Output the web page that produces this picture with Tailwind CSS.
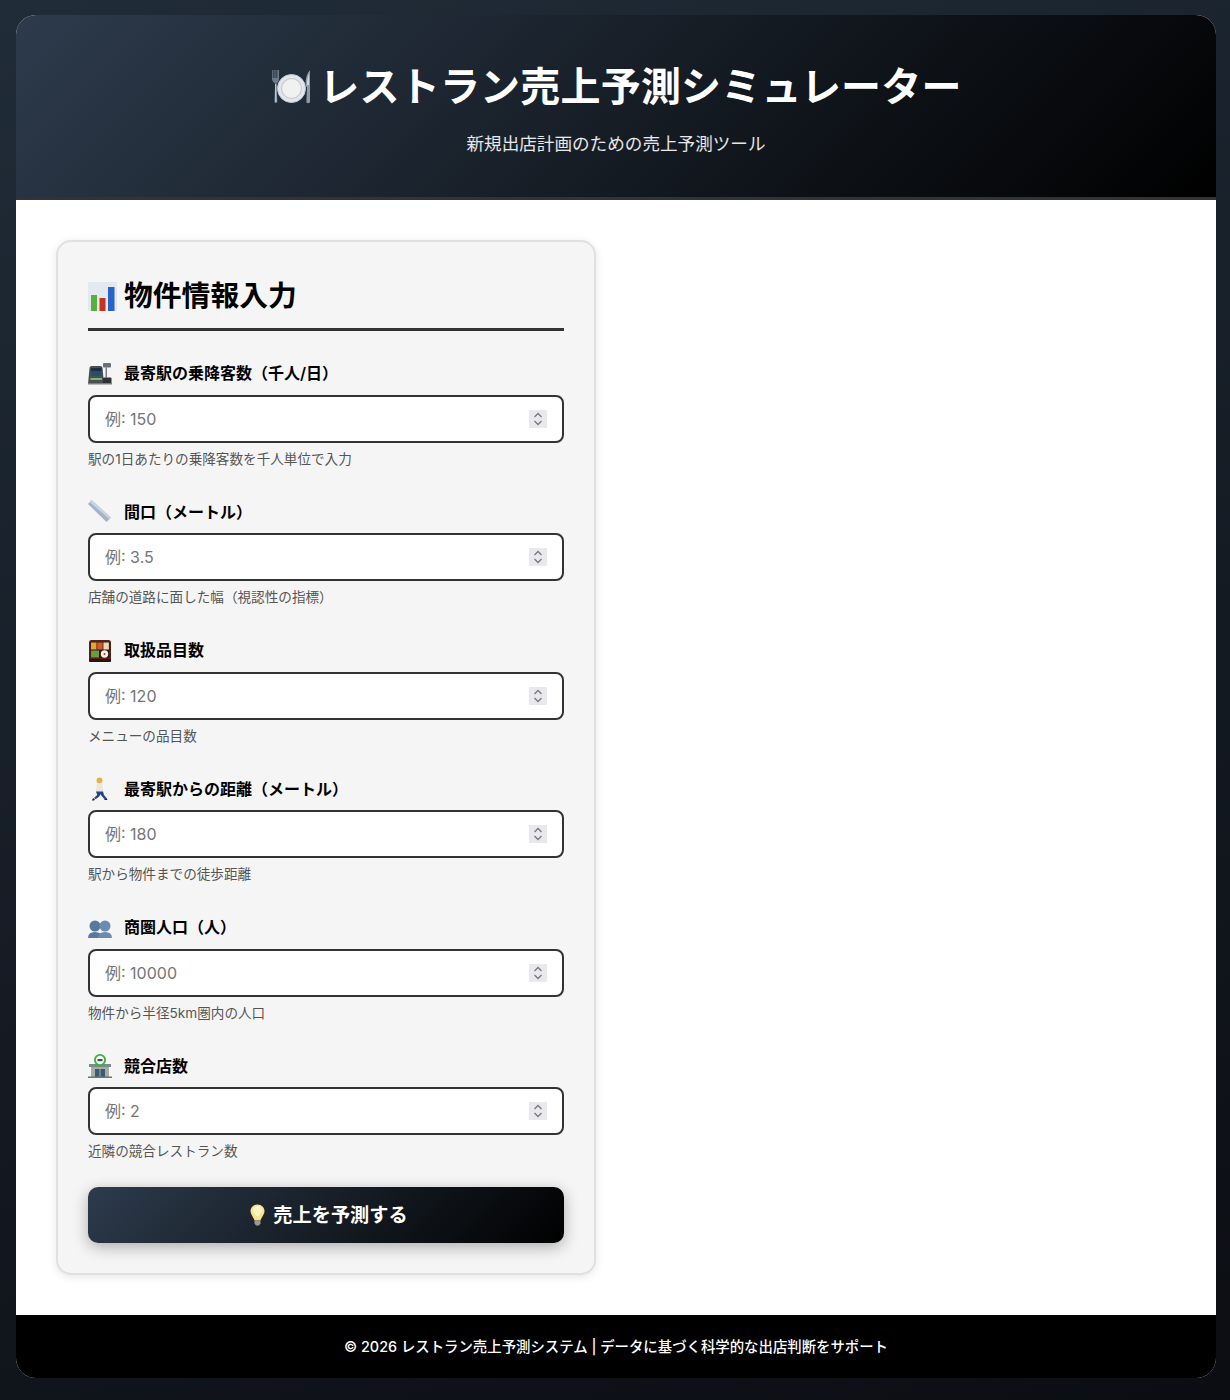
<!DOCTYPE html>
<html lang="ja">

<head>
    <meta charset="UTF-8">
    <meta name="viewport" content="width=device-width, initial-scale=1.0">
    <title>レストラン売上予測シミュレーター</title>
    <script src="https://cdn.jsdelivr.net/npm/@tailwindcss/browser@4"></script>
</head>

<body class="min-h-screen bg-linear-[160deg,#202c38,#0b0d12] pt-[15px] pb-[22px] text-[#333] leading-[1.6] font-[Inter,'Noto_Sans_CJK_JP',sans-serif]">
    <div class="ml-4 w-[1200px] rounded-[20px] overflow-hidden bg-white">
        <header class="bg-linear-[135deg,#2d3b4c,#000] border-b-[3px] border-[#333] pt-10 pb-[39px] text-center text-white">
            <h1 class="flex justify-center items-center gap-[6px] text-[40px] leading-[64px] font-bold tracking-[0.2px] mb-[11px]">
                <svg class="w-[43px] h-[36px]" viewBox="0 0 43 36">
                    <path d="M2 1h.8v8h.9V1h.9v8h.9V1h.9v8h.9V1H9v9c0 2.500-1.600 3.500-2.300 4.500L7.300 33c0 1.500-2.800 1.500-2.800 0l.6-18.500C4 13.500 2 12.500 2 10z" fill="#6e7a88" />
                    <path d="M5 15h1.200l.5 18H4.900z" fill="#b6c2d2" />
                    <circle cx="21.500" cy="19.500" r="14" fill="#e4e7ea" stroke="#bccbe0" />
                    <circle cx="21.500" cy="19.500" r="10" fill="#f0f1f1" stroke="#c8cacc" stroke-width="1.200" />
                    <path d="M40 1c-3 3-4.500 8-4.500 15 0 1.500 1 2 1.500 2l-.6 15c0 1.500 3.600 1.500 3.600 0z" fill="#8f9aa8" />
                    <path d="M39 5c-1.500 3-2 6-2 11h2z" fill="#cdd5df" />
                </svg>
                <span>レストラン売上予測シミュレーター</span>
            </h1>
            <p class="text-[17.6px] text-white/90">新規出店計画のための売上予測ツール</p>
        </header>

        <main class="grid grid-cols-2 gap-10 p-10">
            <form class="bg-[#f5f5f5] border-2 border-[#e0e0e0] rounded-[15px] p-[30px] shadow-[0_2px_8px_rgba(0,0,0,0.1)]">
                <h2 class="flex items-center gap-[7px] text-[28.8px] font-bold text-black border-b-[3px] border-[#333] pt-px pb-[9px] mb-[30px]">
                    <svg class="w-[29px] h-[29px]" viewBox="0 0 29 29">
                        <rect x="0" y="0" width="29" height="29" fill="#e4e9ef" />
                        <rect x="3" y="13" width="6" height="16" fill="#55b03f" />
                        <rect x="11.500" y="16" width="6" height="13" fill="#c8301f" />
                        <rect x="20" y="5" width="6.500" height="24" fill="#2b62c9" />
                    </svg>
                    <span>物件情報入力</span>
                </h2>

                <div class="mb-[29.14px]">
                    <label class="flex items-center gap-3 mb-2 text-base leading-[25.6px] font-semibold text-black">
                        <svg class="w-6 h-6" viewBox="0 0 24 24">
                            <path d="M0 22 1.500 6q.2-2 2-2h9q1.800 0 2 2L16 22z" fill="#4a4f55" />
                            <rect x="3" y="6" width="10.500" height="8" rx="1" fill="#23506a" />
                            <rect x="3" y="6" width="10.500" height="3" fill="#1b2f3d" />
                            <rect x="2.500" y="16" width="11.500" height="2" fill="#7fb86a" />
                            <rect x="15" y="1" width="8" height="4.500" rx="1" fill="#6b7075" />
                            <rect x="17.500" y="5.500" width="1.500" height="10" fill="#777c80" />
                            <rect x="15" y="15.500" width="8.500" height="6.500" rx="1" fill="#2e3236" />
                            <rect x="0" y="21" width="24" height="1.500" fill="#7c8084" />
                        </svg>
                        <span>最寄駅の乗降客数（千人/日）</span>
                    </label>
                    <div class="relative">
                        <input type="number" placeholder="例: 150" class="w-full h-12 px-[15px] bg-white border-2 border-[#333] rounded-lg text-base placeholder:text-[#757575] outline-none">
                        <span class="absolute right-[17px] top-[15px] w-[18px] h-[18px] bg-[#e9e9ed] flex items-center justify-center">
                            <svg class="w-[10px] h-[14px]" viewBox="0 0 10 14" fill="none" stroke="#77777c" stroke-width="1.300"><path d="M1.500 5 5 1.500 8.500 5M1.500 9 5 12.500 8.500 9" /></svg>
                        </span>
                    </div>
                    <small class="block mt-[6px] text-[13.6px] text-[#555]">駅の1日あたりの乗降客数を千人単位で入力</small>
                </div>

                <div class="mb-[29.14px]">
                    <label class="flex items-center gap-3 mb-2 text-base leading-[25.6px] font-semibold text-black">
                        <svg class="w-6 h-6" viewBox="0 0 24 24">
                            <path d="M3.500 0 23 17.500 18.500 22 0 4z" fill="#a3b4c9" />
                            <path d="M3.500 0 23 17.500 21.500 19 1.500 2z" fill="#c8d4e2" />
                        </svg>
                        <span>間口（メートル）</span>
                    </label>
                    <div class="relative">
                        <input type="number" placeholder="例: 3.5" class="w-full h-12 px-[15px] bg-white border-2 border-[#333] rounded-lg text-base placeholder:text-[#757575] outline-none">
                        <span class="absolute right-[17px] top-[15px] w-[18px] h-[18px] bg-[#e9e9ed] flex items-center justify-center">
                            <svg class="w-[10px] h-[14px]" viewBox="0 0 10 14" fill="none" stroke="#77777c" stroke-width="1.300"><path d="M1.500 5 5 1.500 8.500 5M1.500 9 5 12.500 8.500 9" /></svg>
                        </span>
                    </div>
                    <small class="block mt-[6px] text-[13.6px] text-[#555]">店舗の道路に面した幅（視認性の指標）</small>
                </div>

                <div class="mb-[29.14px]">
                    <label class="flex items-center gap-3 mb-2 text-base leading-[25.6px] font-semibold text-black">
                        <svg class="w-6 h-6" viewBox="0 0 24 24">
                            <rect x="1" y="1" width="22" height="22" rx="2.500" fill="#5a2118" />
                            <rect x="2.500" y="3" width="19" height="16" fill="#2b1a14" />
                            <rect x="3" y="3.500" width="5.500" height="7" fill="#e4a33a" />
                            <rect x="9.200" y="3.500" width="5.500" height="7" fill="#d9542f" />
                            <rect x="15.400" y="3.500" width="5.500" height="7" fill="#e9d9b8" />
                            <rect x="3" y="11.500" width="8" height="7" fill="#6d9a3e" />
                            <circle cx="16.500" cy="15" r="3.700" fill="#f3f1ea" />
                            <circle cx="16.500" cy="15" r="1" fill="#c8301f" />
                            <rect x="1" y="20" width="22" height="3" rx="1" fill="#2a1410" />
                        </svg>
                        <span>取扱品目数</span>
                    </label>
                    <div class="relative">
                        <input type="number" placeholder="例: 120" class="w-full h-12 px-[15px] bg-white border-2 border-[#333] rounded-lg text-base placeholder:text-[#757575] outline-none">
                        <span class="absolute right-[17px] top-[15px] w-[18px] h-[18px] bg-[#e9e9ed] flex items-center justify-center">
                            <svg class="w-[10px] h-[14px]" viewBox="0 0 10 14" fill="none" stroke="#77777c" stroke-width="1.300"><path d="M1.500 5 5 1.500 8.500 5M1.500 9 5 12.500 8.500 9" /></svg>
                        </span>
                    </div>
                    <small class="block mt-[6px] text-[13.6px] text-[#555]">メニューの品目数</small>
                </div>

                <div class="mb-[29.14px]">
                    <label class="flex items-center gap-3 mb-2 text-base leading-[25.6px] font-semibold text-black">
                        <svg class="w-6 h-6" viewBox="0 0 24 24">
                            <circle cx="11.500" cy="3.500" r="3" fill="#e7b04a" />
                            <path d="M8.500 6.500h5.500l1.500 8.500H8z" fill="#ece6d6" />
                            <path d="M8 14.500h7l1 3.500 2.500 3-2 1.200-3-3.500-1-1.500-1.500 2.500-3.500 2.500-1.300-1.500 3-2.700z" fill="#26428a" />
                            <path d="M5 21l2 1.500-1 1H4zM16.500 22l2-1 1 2h-3z" fill="#1d2230" />
                        </svg>
                        <span>最寄駅からの距離（メートル）</span>
                    </label>
                    <div class="relative">
                        <input type="number" placeholder="例: 180" class="w-full h-12 px-[15px] bg-white border-2 border-[#333] rounded-lg text-base placeholder:text-[#757575] outline-none">
                        <span class="absolute right-[17px] top-[15px] w-[18px] h-[18px] bg-[#e9e9ed] flex items-center justify-center">
                            <svg class="w-[10px] h-[14px]" viewBox="0 0 10 14" fill="none" stroke="#77777c" stroke-width="1.300"><path d="M1.500 5 5 1.500 8.500 5M1.500 9 5 12.500 8.500 9" /></svg>
                        </span>
                    </div>
                    <small class="block mt-[6px] text-[13.6px] text-[#555]">駅から物件までの徒歩距離</small>
                </div>

                <div class="mb-[29.14px]">
                    <label class="flex items-center gap-3 mb-2 text-base leading-[25.6px] font-semibold text-black">
                        <svg class="w-6 h-6" viewBox="0 0 24 24">
                            <circle cx="7" cy="10" r="5.500" fill="#58799f" />
                            <path d="M0 22q0-6 7-6t7 6z" fill="#58799f" />
                            <circle cx="17" cy="10" r="5.500" fill="#6a8cb2" />
                            <path d="M10 22q0-6 7-6t7 6z" fill="#6a8cb2" />
                        </svg>
                        <span>商圏人口（人）</span>
                    </label>
                    <div class="relative">
                        <input type="number" placeholder="例: 10000" class="w-full h-12 px-[15px] bg-white border-2 border-[#333] rounded-lg text-base placeholder:text-[#757575] outline-none">
                        <span class="absolute right-[17px] top-[15px] w-[18px] h-[18px] bg-[#e9e9ed] flex items-center justify-center">
                            <svg class="w-[10px] h-[14px]" viewBox="0 0 10 14" fill="none" stroke="#77777c" stroke-width="1.300"><path d="M1.500 5 5 1.500 8.500 5M1.500 9 5 12.500 8.500 9" /></svg>
                        </span>
                    </div>
                    <small class="block mt-[6px] text-[13.6px] text-[#555]">物件から半径5km圏内の人口</small>
                </div>

                <div class="mb-[24.1px]">
                    <label class="flex items-center gap-3 mb-2 text-base leading-[25.6px] font-semibold text-black">
                        <svg class="w-6 h-6" viewBox="0 0 24 24">
                            <rect x="3" y="11" width="18" height="12" fill="#a3aea8" />
                            <rect x="1" y="10" width="22" height="3" fill="#7b8a88" />
                            <rect x="7" y="15" width="10" height="8" fill="#3f5a70" />
                            <rect x="11.500" y="15" width="1" height="8" fill="#a3aea8" />
                            <rect x="0" y="22.500" width="24" height="1.500" fill="#6b7280" />
                            <circle cx="12" cy="6" r="6" fill="#3cab4c" />
                            <circle cx="12" cy="6" r="4.200" fill="#f4f6f4" />
                            <rect x="9.500" y="5" width="5" height="2.200" fill="#3c5a46" />
                        </svg>
                        <span>競合店数</span>
                    </label>
                    <div class="relative">
                        <input type="number" placeholder="例: 2" class="w-full h-12 px-[15px] bg-white border-2 border-[#333] rounded-lg text-base placeholder:text-[#757575] outline-none">
                        <span class="absolute right-[17px] top-[15px] w-[18px] h-[18px] bg-[#e9e9ed] flex items-center justify-center">
                            <svg class="w-[10px] h-[14px]" viewBox="0 0 10 14" fill="none" stroke="#77777c" stroke-width="1.300"><path d="M1.500 5 5 1.500 8.500 5M1.500 9 5 12.500 8.500 9" /></svg>
                        </span>
                    </div>
                    <small class="block mt-[6px] text-[13.6px] text-[#555]">近隣の競合レストラン数</small>
                </div>

                <button type="button" class="flex items-center justify-center gap-2 w-full h-14 pl-[6px] rounded-[10px] bg-linear-[135deg,#2d3b4c,#000] text-white text-[19.2px] font-bold shadow-[0_4px_15px_rgba(0,0,0,0.3)]">
                    <svg class="w-[15px] h-[22px]" viewBox="2.500 0 14 22">
                        <path d="M9.500 0.500c4.200 0 7 3 7 6.500 0 3.500-3 6-4 9.500h-6c-1-3.500-4-6-4-9.500 0-3.500 2.800-6.500 7-6.500z" fill="#fbe38a" />
                        <path d="M9.500 2c2.500 0 4.500 2 4.500 4.500 0 2-2 3.500-3 5.500H8C7 10 5 8.500 5 6.500 5 4 7 2 9.500 2z" fill="#fff4c4" />
                        <path d="M6.500 16.500h6v3l-1.500 2H8l-1.500-2z" fill="#9a9a94" />
                    </svg>
                    <span>売上を予測する</span>
                </button>
            </form>
            <div></div>
        </main>

        <footer class="bg-black h-[63px] flex items-center justify-center text-white text-[14.4px] font-medium">
            © 2026 レストラン売上予測システム | データに基づく科学的な出店判断をサポート
        </footer>
    </div>
</body>

</html>
